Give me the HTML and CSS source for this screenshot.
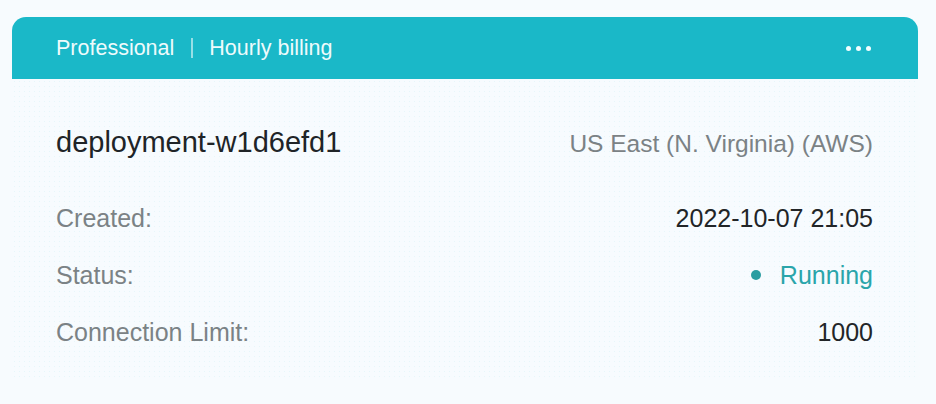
FILE: index.html
```html
<!DOCTYPE html>
<html>
<head>
<meta charset="utf-8">
<link rel="stylesheet" href="styles.css">
</head>
<body>
<div class="card">
  <div class="card-header">
    <div class="plan">
      <span>Professional</span>
      <span class="sep"></span>
      <span>Hourly billing</span>
    </div>
    <div class="more" aria-label="More">
      <i></i><i></i><i></i>
    </div>
  </div>
  <div class="card-body">
    <div class="title-row">
      <span class="name">deployment-w1d6efd1</span>
      <span class="region">US East (N. Virginia) (AWS)</span>
    </div>
    <div class="row">
      <span class="label">Created:</span>
      <span class="value">2022-10-07 21:05</span>
    </div>
    <div class="row">
      <span class="label">Status:</span>
      <span class="value status"><span class="dot"></span>Running</span>
    </div>
    <div class="row">
      <span class="label">Connection Limit:</span>
      <span class="value">1000</span>
    </div>
  </div>
</div>
</body>
</html>
```

FILE: styles.css
```css
* { box-sizing: border-box; }
html, body { margin: 0; padding: 0; }
body {
  background: #f7fbfe;
  font-family: "Liberation Sans", Arial, Helvetica, sans-serif;
  width: 936px;
  height: 404px;
  overflow: hidden;
}
.card {
  margin: 17px 0 0 12px;
  width: 906px;
}
.card-header {
  height: 62px;
  background: #1ab8c8;
  border-radius: 14px 14px 0 0;
  display: flex;
  align-items: center;
  justify-content: space-between;
  padding: 0 47px 0 44px;
  color: #eefbfc;
  font-size: 21.5px;
}
.plan {
  display: flex;
  align-items: center;
}
.sep {
  width: 2px;
  height: 20px;
  background: rgba(255,255,255,0.55);
  margin: 0 16px 0 17px;
}
.more {
  display: flex;
  gap: 5px;
  align-items: center;
}
.more i {
  display: block;
  width: 5px;
  height: 5px;
  border-radius: 50%;
  background: #f2fdfe;
}
.card-body {
  padding: 43px 45px 20px 44px;
  background-color: #f7fbfe;
  background-image: radial-gradient(circle, rgba(120, 220, 230, 0.14) 0.6px, transparent 0.9px);
  background-size: 5px 5px;
}
.title-row {
  display: flex;
  justify-content: space-between;
  align-items: baseline;
  line-height: 40px;
  margin-bottom: 26px;
}
.name {
  font-size: 29px;
  color: #202427;
}
.region {
  font-size: 24.5px;
  color: #7b8285;
}
.row {
  display: flex;
  justify-content: space-between;
  align-items: baseline;
  font-size: 25px;
  line-height: 57px;
}
.label { color: #7b8285; }
.value { color: #222527; }
.status {
  color: #2aa5aa;
}
.dot {
  display: inline-block;
  vertical-align: middle;
  width: 10px;
  height: 10px;
  border-radius: 50%;
  background: #2a9da1;
  margin: -4px 19px 0 0;
}
```
